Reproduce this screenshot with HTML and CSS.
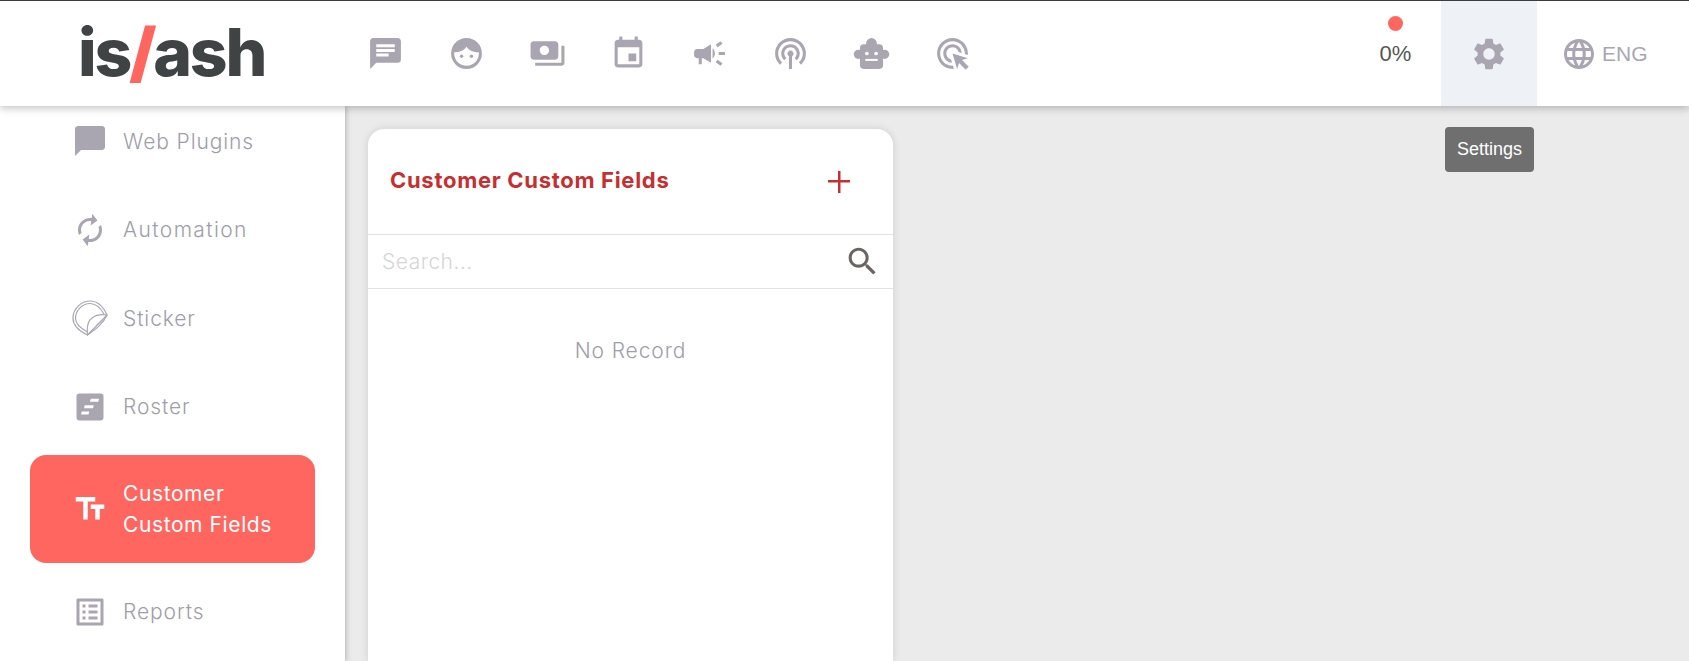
FILE: index.html
```html
<!DOCTYPE html>
<html lang="en">
<head>
  <meta charset="UTF-8">
  <meta name="viewport" content="width=device-width, initial-scale=1.0">
  <title>iSlash - Customer Custom Fields</title>
  <link rel="stylesheet" href="styles.css">
</head>
<body>
  <header class="topbar">
    <div class="logo">is<span class="logo-slash">/</span>ash</div>
    <nav class="topnav">
      <a class="topnav-item"><svg viewBox="0 0 24 24"><path d="M20 2H4c-1.1 0-1.99.9-1.99 2L2 22l4-4h14c1.1 0 2-.9 2-2V4c0-1.1-.9-2-2-2zM6 9h12v2H6V9zm8 5H6v-2h8v2zm4-6H6V6h12v2z"/></svg></a>
      <a class="topnav-item"><svg viewBox="0 0 24 24"><path fill-rule="evenodd" d="M12 2a10 10 0 1 0 0 20 10 10 0 0 0 0-20zM4.100 11.200c3.300 0 6.300-1.200 7.900-3.600 1.600 2.400 4.600 3.600 7.900 3.600.1.300.1.500.1.800 0 4.400-3.600 8-8 8s-8-3.600-8-8c0-.3 0-.5.100-.8z"/><circle cx="8.800" cy="13.800" r="1.100"/><circle cx="15.200" cy="13.800" r="1.100"/></svg></a>
      <a class="topnav-item"><svg viewBox="0 0 24 24"><path d="M19 14V6c0-1.100-.9-2-2-2H3c-1.100 0-2 .9-2 2v8c0 1.100.9 2 2 2h14c1.100 0 2-.9 2-2zm-9-1c-1.660 0-3-1.340-3-3s1.340-3 3-3 3 1.340 3 3-1.340 3-3 3zm13-6v11c0 1.100-.9 2-2 2H4v-2h17V7h2z"/></svg></a>
      <a class="topnav-item"><svg viewBox="0 0 24 24"><path d="M17 12h-5v5h5v-5zM16 1v2H8V1H6v2H5c-1.110 0-1.990.9-1.990 2L3 19c0 1.100.89 2 2 2h14c1.100 0 2-.9 2-2V5c0-1.100-.9-2-2-2h-1V1h-2zm3 18H5V8h14v11z"/></svg></a>
      <a class="topnav-item"><svg viewBox="0 0 24 24"><path d="M18 11v2h4v-2h-4zm-2 6.610c.96.71 2.210 1.650 3.200 2.390.4-.53.8-1.070 1.200-1.600-.99-.74-2.240-1.680-3.200-2.400-.4.54-.8 1.080-1.200 1.610zM20.400 5.600c-.4-.53-.8-1.070-1.200-1.600-.99.74-2.240 1.680-3.200 2.400.4.53.8 1.070 1.200 1.600.96-.72 2.210-1.650 3.200-2.400zM4 9c-1.100 0-2 .9-2 2v2c0 1.100.9 2 2 2h1v4h2v-4h1l5 3V6L8 9H4zm11.500 3c0-1.330-.58-2.530-1.500-3.350v6.690c.92-.81 1.500-2.010 1.500-3.340z"/></svg></a>
      <a class="topnav-item"><svg viewBox="0 0 24 24"><path d="M14 12c0 .74-.4 1.380-1 1.720V22h-2v-8.280c-.6-.35-1-.98-1-1.720 0-1.100.9-2 2-2s2 .9 2 2zm-2-6c-3.310 0-6 2.690-6 6 0 1.740.75 3.310 1.940 4.400l1.420-1.420C8.530 14.250 8 13.190 8 12c0-2.210 1.790-4 4-4s4 1.790 4 4c0 1.190-.53 2.250-1.360 2.980l1.420 1.420C17.250 15.310 18 13.740 18 12c0-3.310-2.690-6-6-6zm0-4C6.480 2 2 6.480 2 12c0 2.850 1.200 5.410 3.110 7.240l1.420-1.420C4.980 16.360 4 14.290 4 12c0-4.410 3.590-8 8-8s8 3.590 8 8c0 2.290-.98 4.360-2.530 5.820l1.420 1.420C20.800 17.410 22 14.850 22 12c0-5.520-4.480-10-10-10z"/></svg></a>
      <a class="topnav-item"><svg viewBox="0 0 24 24"><circle cx="12" cy="5.500" r="3.500"/><circle cx="3.500" cy="12.500" r="3"/><circle cx="20.500" cy="12.500" r="3"/><rect x="4.500" y="6" width="15" height="16" rx="2.500"/><circle cx="9" cy="12" r="1.200" fill="#fff"/><circle cx="15" cy="12" r="1.200" fill="#fff"/><rect x="8" y="15.500" width="8" height="1.300" fill="#fff"/></svg></a>
      <a class="topnav-item"><svg viewBox="0 0 24 24"><path d="M11.710 17.990C8.530 17.840 6 15.220 6 12c0-3.310 2.690-6 6-6 3.220 0 5.840 2.530 5.990 5.710l-2.100-.63C15.480 9.310 13.890 8 12 8c-2.210 0-4 1.790-4 4 0 1.890 1.310 3.480 3.080 3.890l.63 2.100zM22 12c0 .3-.01.6-.04.9l-1.970-.59c.01-.1.01-.21.01-.31 0-4.420-3.580-8-8-8s-8 3.580-8 8 3.580 8 8 8c.1 0 .21 0 .31-.01l.59 1.970c-.3.03-.6.04-.9.04-5.520 0-10-4.480-10-10S6.480 2 12 2s10 4.480 10 10zm-3.770 4.260L22 15l-10-3 3 10 1.260-3.770 4.270 4.270 1.980-1.980-4.280-4.260z"/></svg></a>
    </nav>
    <div class="topbar-right">
      <div class="progress">
        <span class="progress-dot"></span>
        <span class="progress-text">0%</span>
      </div>
      <a class="settings-btn">
        <svg viewBox="0 0 24 24"><path d="M19.140 12.940c.04-.3.06-.61.06-.94 0-.32-.02-.64-.07-.94l2.030-1.580c.18-.14.23-.41.12-.61l-1.920-3.320c-.12-.22-.37-.29-.59-.22l-2.390.96c-.5-.38-1.030-.7-1.620-.94l-.36-2.540c-.04-.24-.24-.41-.48-.41h-3.840c-.24 0-.43.17-.47.41l-.36 2.540c-.59.24-1.130.57-1.620.94l-2.390-.96c-.22-.08-.47 0-.59.22L2.740 8.870c-.12.21-.08.47.12.61l2.030 1.580c-.05.3-.09.63-.09.94s.02.64.07.94l-2.030 1.580c-.18.14-.23.41-.12.61l1.920 3.320c.12.22.37.29.59.22l2.390-.96c.5.38 1.030.7 1.620.94l.36 2.540c.05.24.24.41.48.41h3.840c.24 0 .44-.17.47-.41l.36-2.540c.59-.24 1.130-.56 1.620-.94l2.390.96c.22.08.47 0 .59-.22l1.920-3.320c.12-.22.07-.47-.12-.61l-2.010-1.580zM12 15.600c-1.980 0-3.600-1.620-3.600-3.600s1.620-3.600 3.600-3.600 3.600 1.620 3.600 3.600-1.620 3.600-3.600 3.600z"/></svg>
        <span class="tooltip">Settings</span>
      </a>
      <a class="lang">
        <svg viewBox="0 0 24 24"><path d="M11.990 2C6.470 2 2 6.480 2 12s4.470 10 9.990 10C17.520 22 22 17.520 22 12S17.520 2 11.990 2zm6.930 6h-2.950c-.32-1.250-.78-2.450-1.380-3.560 1.840.63 3.370 1.910 4.330 3.560zM12 4.040c.83 1.200 1.480 2.530 1.910 3.960h-3.820c.43-1.430 1.080-2.760 1.910-3.960zM4.260 14C4.100 13.360 4 12.690 4 12s.1-1.360.26-2h3.380c-.08.66-.14 1.320-.14 2 0 .68.06 1.340.14 2H4.260zm.82 2h2.950c.32 1.250.78 2.450 1.380 3.560-1.840-.63-3.370-1.900-4.330-3.560zm2.950-8H5.080c.96-1.660 2.490-2.930 4.330-3.560C8.810 5.550 8.350 6.750 8.030 8zM12 19.960c-.83-1.200-1.480-2.530-1.910-3.960h3.820c-.43 1.430-1.080 2.760-1.910 3.960zM14.340 14H9.660c-.09-.66-.16-1.320-.16-2 0-.68.07-1.350.16-2h4.680c.09.65.16 1.320.16 2 0 .68-.07 1.340-.16 2zm.25 5.560c.6-1.110 1.060-2.310 1.380-3.560h2.950c-.96 1.650-2.490 2.930-4.330 3.560zM16.360 14c.08-.66.14-1.320.14-2 0-.68-.06-1.340-.14-2h3.380c.16.64.26 1.310.26 2s-.1 1.360-.26 2h-3.380z"/></svg>
        <span>ENG</span>
      </a>
    </div>
  </header>

  <div class="layout">
    <aside class="sidebar">
      <a class="side-item">
        <svg viewBox="0 0 24 24"><path d="M20 2H4c-1.100 0-2 .9-2 2v18l4-4h14c1.100 0 2-.9 2-2V4c0-1.100-.9-2-2-2z"/></svg>
        <span>Web Plugins</span>
      </a>
      <a class="side-item">
        <svg class="icon-tilt" viewBox="0 0 24 24"><path d="M12 6v3l4-4-4-4v3c-4.420 0-8 3.580-8 8 0 1.570.46 3.030 1.240 4.260L6.700 14.800c-.45-.83-.7-1.790-.7-2.800 0-3.310 2.690-6 6-6zm6.760 1.740L17.300 9.200c.44.84.7 1.790.7 2.800 0 3.310-2.690 6-6 6v-3l-4 4 4 4v-3c4.420 0 8-3.580 8-8 0-1.570-.46-3.030-1.240-4.260z"/></svg>
        <span class="label-wide">Automation</span>
      </a>
      <a class="side-item">
        <svg class="icon-line" viewBox="0 0 36 36"><path d="M15.500 35 C7 31 1 25 1 18 C1 9 9 1 18 1 C25 1 31 6 35 15 Z"/><path d="M15.500 32 C9 28.500 3.500 24 3.500 18 C3.500 10.500 10.500 3.500 18 3.500 C23.500 3.500 28.500 8 32 14"/><path d="M15.500 35 C14.500 26 16 21 20 18 C24 15 29 14 35 15 C31 24 24 29 15.500 35 Z"/></svg>
        <span>Sticker</span>
      </a>
      <a class="side-item">
        <svg viewBox="0 0 24 24"><path fill-rule="evenodd" d="M5 3h14a2 2 0 0 1 2 2v14a2 2 0 0 1-2 2H5a2 2 0 0 1-2-2V5a2 2 0 0 1 2-2zm7.500 3.500-.5 2h5.500l.5-2h-5.500zM8.500 10.800l-.5 2h6l.5-2h-6zm-2 4.200-.5 2h5l.5-2h-5z"/></svg>
        <span>Roster</span>
      </a>
      <a class="side-item side-item-active">
        <svg viewBox="0 0 24 24"><path d="M2.500 4v3h5v12h3V7h5V4h-13zm19 5h-9v3h3v7h3v-7h3V9z"/></svg>
        <span>Customer<br>Custom Fields</span>
      </a>
      <a class="side-item">
        <svg viewBox="0 0 24 24"><path d="M19 5v14H5V5h14m1.100-2H3.900c-.5 0-.9.4-.9.9v16.200c0 .4.4.9.9.9h16.200c.4 0 .9-.5.9-.9V3.900c0-.5-.5-.9-.9-.9zM11 7h6v2h-6V7zm0 4h6v2h-6v-2zm0 4h6v2h-6zM7 7h2v2H7zm0 4h2v2H7zm0 4h2v2H7z"/></svg>
        <span>Reports</span>
      </a>
    </aside>

    <main class="content">
      <section class="card">
        <div class="card-head">
          <h2 class="card-title">Customer Custom Fields</h2>
          <span class="add-btn"></span>
        </div>
        <div class="search-row">
          <span class="search-text">Search...</span>
          <svg viewBox="0 0 24 24"><path d="M15.500 14h-.79l-.28-.27C15.410 12.590 16 11.110 16 9.500 16 5.910 13.090 3 9.500 3S3 5.910 3 9.500 5.910 16 9.500 16c1.610 0 3.090-.59 4.230-1.570l.27.28v.79l5 4.990L20.490 19l-4.990-5zm-6 0C7.010 14 5 11.990 5 9.500S7.010 5 9.500 5 14 7.010 14 9.500 11.990 14 9.500 14z"/></svg>
        </div>
        <p class="no-record">No Record</p>
      </section>
    </main>
  </div>
</body>
</html>
```

FILE: styles.css
```css
* {
  box-sizing: border-box;
}
html, body {
  height: 100%;
}
body {
  margin: 0;
  overflow: hidden;
  background: #ebebeb;
  font-family: Inter, "Liberation Sans", sans-serif;
  display: flex;
  flex-direction: column;
}
a {
  color: inherit;
}

/* top bar */
.topbar {
  height: 106px;
  flex: none;
  display: flex;
  align-items: stretch;
  background: #fff;
  border-top: 1px solid #3a3d3d;
  box-shadow: 0 2px 8px rgba(0,0,0,0.25);
  position: relative;
  z-index: 5;
}
.logo {
  width: 345px;
  padding-left: 78px;
  padding-top: 11px;
  font-weight: 800;
  font-size: 66px;
  line-height: 80px;
  letter-spacing: -2.200px;
  color: #3f4344;
}
.logo-slash {
  color: #ff6660;
  font-weight: 900;
  margin: 0 -1px;
}
.topnav {
  display: flex;
  align-items: center;
}
.topnav-item {
  width: 81px;
  height: 37px;
  display: flex;
  justify-content: center;
}
.topnav-item svg {
  width: 37px;
  height: 37px;
  fill: #a9a6b2;
}
.topbar-right {
  margin-left: auto;
  display: flex;
}
.progress {
  width: 92px;
  display: flex;
  flex-direction: column;
  align-items: center;
  padding-top: 15px;
  padding-left: 1px;
  font-family: "Liberation Sans", sans-serif;
  font-size: 22px;
  color: #555;
}
.progress-dot {
  width: 15px;
  height: 15px;
  border-radius: 50%;
  background: #ff6660;
  margin-bottom: 10px;
}
.settings-btn {
  position: relative;
  width: 96px;
  display: flex;
  align-items: center;
  justify-content: center;
  background: #eef2f6;
}
.settings-btn svg {
  width: 38px;
  height: 38px;
  fill: #a9a6b2;
}
.tooltip {
  position: absolute;
  top: 126px;
  left: 4px;
  width: 89px;
  height: 45px;
  background: #6f6f6f;
  border-radius: 4px;
  color: #fff;
  font-family: "Liberation Sans", sans-serif;
  font-size: 18px;
  line-height: 45px;
  text-align: center;
}
.lang {
  width: 152px;
  display: flex;
  align-items: center;
  padding-left: 24px;
  gap: 5px;
  font-family: "Liberation Sans", sans-serif;
  font-size: 21px;
  color: #a9a6b2;
}
.lang svg {
  width: 36px;
  height: 36px;
  fill: #a9a6b2;
}

/* page body */
.layout {
  flex: 1;
  display: flex;
  min-height: 0;
}
.sidebar {
  width: 345px;
  flex: none;
  background: #fff;
  box-shadow: 1px 0 5px rgba(0,0,0,0.25);
  display: flex;
  flex-direction: column;
  gap: 18.5px;
  padding: 0 30px;
  overflow: hidden;
  font-size: 21px;
  letter-spacing: 0.9px;
  font-weight: 300;
  color: #9f9da9;
  position: relative;
  z-index: 2;
}
.side-item {
  min-height: 70px;
  display: flex;
  align-items: center;
  gap: 15px;
  padding-left: 42px;
  flex: none;
}
.side-item svg {
  width: 36px;
  height: 36px;
  flex: none;
  fill: #a9a6b2;
}
.label-wide {
  letter-spacing: 1.400px;
}
.icon-tilt {
  transform: rotate(8deg);
}
.side-item svg.icon-line {
  fill: none;
  stroke: #a9a6b2;
  stroke-width: 1.2;
}
.side-item-active {
  height: 108px;
  margin: -5px 0;
  background: #ff6660;
  border-radius: 16px;
  color: #fff;
  line-height: 31px;
  letter-spacing: 0.6px;
  font-weight: 400;
}
.side-item-active svg {
  fill: #fff;
}

/* card */
.content {
  flex: 1;
  padding: 23px 0 0 23px;
  min-width: 0;
  overflow: hidden;
}
.card {
  width: 525px;
  height: 100%;
  background: #fff;
  border-radius: 16px 16px 0 0;
  box-shadow: 0 0 8px rgba(0,0,0,0.12);
}
.card-head {
  height: 106px;
  padding: 0 43px 0 22px;
  display: flex;
  align-items: center;
  justify-content: space-between;
  border-bottom: 1px solid #e2e2e2;
}
.card-title {
  margin: 0;
  font-size: 22px;
  letter-spacing: 0.7px;
  font-weight: 700;
  color: #c62f2f;
  padding-bottom: 3px;
}
.add-btn {
  width: 22px;
  height: 22px;
  background:
    linear-gradient(#c62f2f, #c62f2f) center / 100% 2.500px no-repeat,
    linear-gradient(#c62f2f, #c62f2f) center / 2.500px 100% no-repeat;
}
.search-row {
  height: 54px;
  padding: 0 12px 0 14px;
  display: flex;
  align-items: center;
  justify-content: space-between;
  border-bottom: 1px solid #e2e2e2;
}
.search-text {
  font-size: 21px;
  letter-spacing: 0.5px;
  font-weight: 300;
  color: #d6d6d6;
}
.search-row svg {
  width: 37px;
  height: 37px;
  fill: #6b6464;
}
.no-record {
  margin: 49px 0 0;
  text-align: center;
  font-size: 21px;
  letter-spacing: 0.9px;
  font-weight: 300;
  color: #9f9da9;
}
```
